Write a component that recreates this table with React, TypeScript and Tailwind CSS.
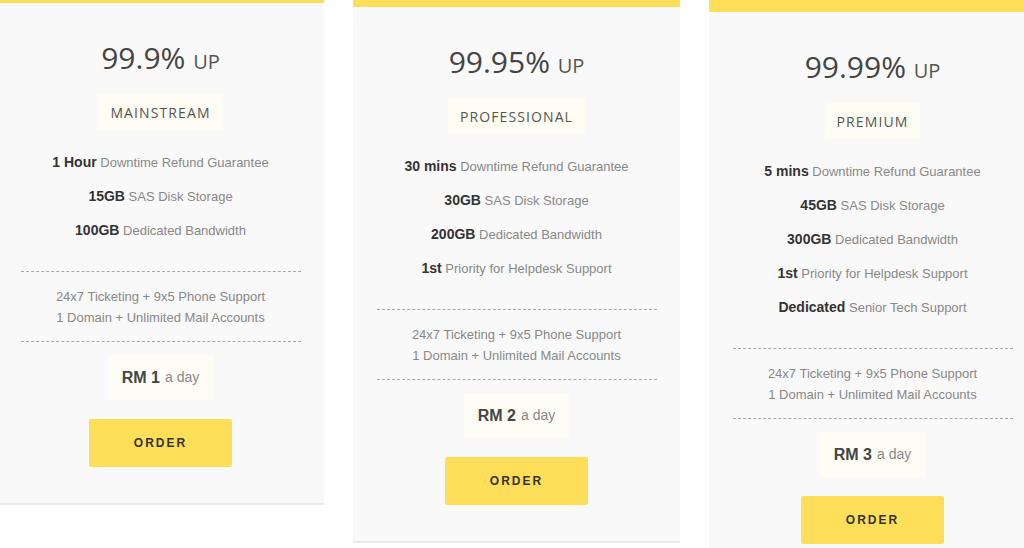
type Plan = {
  uptime: string;
  name: string;
  price: string;
  offset: string;
  features: [string, string][];
};

const plans: Plan[] = [
  {
    uptime: '99.9%',
    name: 'MAINSTREAM',
    price: 'RM 1',
    offset: '-mt-[9px]',
    features: [
      ['1 Hour', 'Downtime Refund Guarantee'],
      ['15GB', 'SAS Disk Storage'],
      ['100GB', 'Dedicated Bandwidth'],
    ],
  },
  {
    uptime: '99.95%',
    name: 'PROFESSIONAL',
    price: 'RM 2',
    offset: '-mt-[5px]',
    features: [
      ['30 mins', 'Downtime Refund Guarantee'],
      ['30GB', 'SAS Disk Storage'],
      ['200GB', 'Dedicated Bandwidth'],
      ['1st', 'Priority for Helpdesk Support'],
    ],
  },
  {
    uptime: '99.99%',
    name: 'PREMIUM',
    price: 'RM 3',
    offset: 'mt-0',
    features: [
      ['5 mins', 'Downtime Refund Guarantee'],
      ['45GB', 'SAS Disk Storage'],
      ['300GB', 'Dedicated Bandwidth'],
      ['1st', 'Priority for Helpdesk Support'],
      ['Dedicated', 'Senior Tech Support'],
    ],
  },
];

const heading = { fontFamily: '"Open Sans", "DejaVu Sans", sans-serif' };
const body = { fontFamily: '"Liberation Sans", Arial, sans-serif' };

function PlanCard({ plan }: { plan: Plan }) {
  return (
    <div className={`w-[327px] shrink-0 self-start bg-[#f9f9f9] border-t-[12px] border-[#ffdf5a] shadow-[0_2px_0_#ebebeb] ${plan.offset}`}>
      <div className="flex flex-col items-center pt-[40px] pb-[36px]">
        <h3 className="text-[30px] leading-[30px] text-[#444] font-normal" style={heading}>
          {plan.uptime} <span className="text-[20px] text-[#555]">UP</span>
        </h3>
        <div
          className="mt-[17px] h-[36px] px-[12px] flex items-center bg-[#fdfdf3] text-[14px] tracking-[1.1px] text-[#555]"
          style={heading}
        >
          {plan.name}
        </div>

        <ul className="mt-[22px] flex flex-col gap-[14px] text-center" style={body}>
          {plan.features.map(([b, t]) => (
            <li key={t} className="h-[20px] leading-[20px] text-[13px] text-[#888] whitespace-nowrap">
              <span className="font-bold text-[14px] leading-[20px] text-[#333]">{b}</span> {t}
            </li>
          ))}
        </ul>

        <div className="mt-[31px] w-[280px] border-y border-dashed border-[#aaa] pt-[14px] pb-[13px] text-center text-[13px] leading-[21px] text-[#888]" style={body}>
          <p>24x7 Ticketing + 9x5 Phone Support</p>
          <p>1 Domain + Unlimited Mail Accounts</p>
        </div>

        <div className="mt-[13px] h-[45px] px-[14px] flex items-center bg-[#fdfdf5]" style={body}>
          <span className="font-bold text-[16px] text-[#444]">{plan.price}</span>
          <span className="ml-[5px] text-[14px] text-[#888]">a day</span>
        </div>

        <button
          className="mt-[19px] w-[143px] h-[48px] rounded-[2px] bg-[#ffdf5a] text-[12px] font-bold tracking-[2px] text-[#333]"
          style={body}
        >
          ORDER
        </button>
      </div>
    </div>
  );
}

export default function App() {
  return (
    <div className="w-[1024px] h-[548px] overflow-hidden bg-white">
      <div className="flex items-start gap-[29px] -ml-[3px]">
        {plans.map((p) => (
          <PlanCard key={p.name} plan={p} />
        ))}
      </div>
    </div>
  );
}
